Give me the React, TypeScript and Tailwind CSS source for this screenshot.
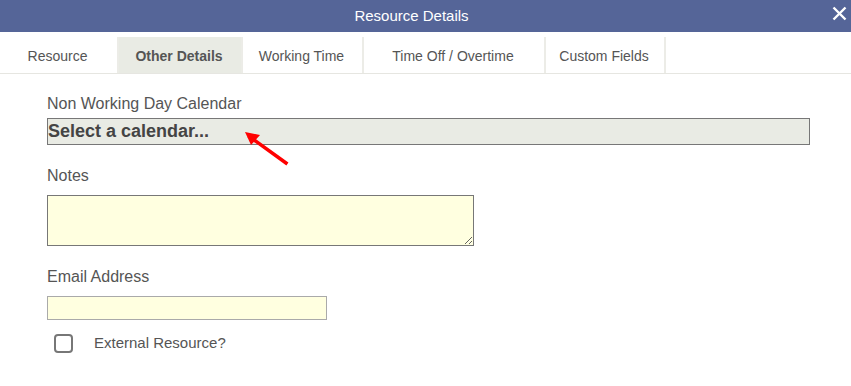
const tabs = [
  { label: 'Resource', w: 'w-[117px]' },
  { label: 'Other Details', w: 'w-[124px]', active: true },
  { label: 'Working Time', w: 'w-[121px]' },
  { label: 'Time Off / Overtime', w: 'w-[182px]' },
  { label: 'Custom Fields', w: 'w-[122px]' },
]

export default function App() {
  return (
    <div className="w-[851px] h-[386px] bg-white font-['Liberation_Sans',Arial,sans-serif] text-[#555]">
      {/* HEADER */}
      <div className="relative h-[32px] bg-[#556598] flex items-center justify-center pr-[28px]">
        <span className="text-white text-[15px]">Resource Details</span>
        <svg className="absolute right-[4px] top-[6px]" width="15" height="15" viewBox="0 0 15 15">
          <path d="M1.5 1.5 L13.5 13.5 M13.5 1.5 L1.5 13.5" stroke="white" strokeWidth="2.4" />
        </svg>
      </div>

      {/* TABS */}
      <div className="mt-[5px] flex h-[37px] border-b border-[#e6e6e1]">
        {tabs.map((t, i) => (
          <div
            key={t.label}
            className={`${t.w} pt-[2px] pr-[2px] flex items-center justify-center text-[14px] ${i > 0 ? 'border-l-2 border-[#ecece7]' : ''} ${i === tabs.length - 1 ? 'border-r-2' : ''} ${t.active ? 'bg-[#e9ebe4] font-bold text-[#555]' : 'text-[#555]'}`}
          >
            {t.label}
          </div>
        ))}
      </div>

      {/* FORM */}
      <div className="relative pl-[47px] pt-[21px]">
        <p className="text-[16px] leading-[18px]">Non Working Day Calendar</p>
        <div className="mt-[5px] w-[763px] h-[27px] bg-[#e9ebe4] border border-[#777] flex items-center">
          <span className="text-[18px] font-bold text-[#444]">Select a calendar...</span>
        </div>

        {/* annotation arrow */}
        <svg className="absolute left-[240px] top-[54px]" width="52" height="40" viewBox="0 0 52 40">
          <path d="M46 35 L10 9" stroke="#f00" strokeWidth="3.5" strokeLinecap="square" />
          <path d="M5 4 L20 7 L11 17 Z" fill="#f00" />
        </svg>

        <p className="mt-[22px] text-[16px] leading-[18px]">Notes</p>
        <textarea className="block mt-[10px] w-[427px] h-[51px] bg-[#ffffe0] border border-[#777] outline-none" />

        <p className="mt-[22px] text-[16px] leading-[18px]">Email Address</p>
        <input className="block mt-[10px] w-[280px] h-[24px] bg-[#ffffe0] border border-[#aaa] outline-none" />

        <label className="mt-[12px] flex items-center">
          <span className="ml-[7px] w-[19px] h-[19px] border-2 border-[#777] rounded-[4px]" />
          <span className="ml-[21px] text-[15px]">External Resource?</span>
        </label>
      </div>
    </div>
  )
}
